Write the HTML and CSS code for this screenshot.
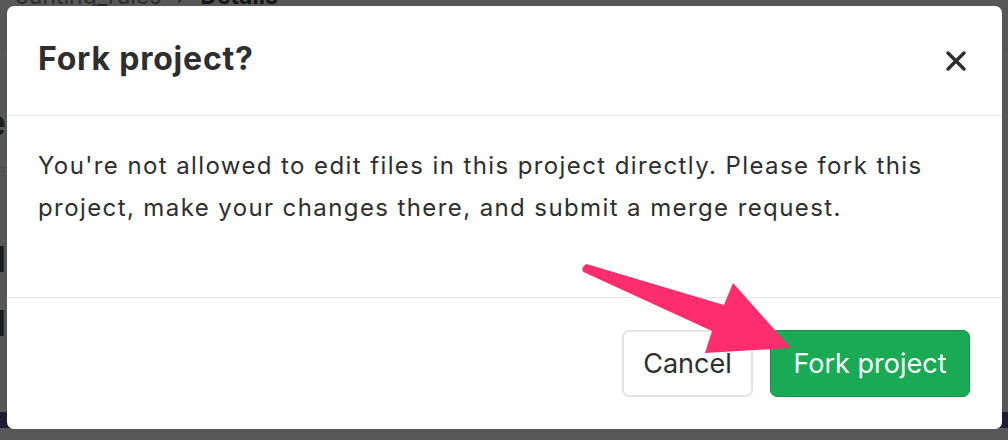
FILE: index.html
```html
<!DOCTYPE html>
<html>
<head>
<meta charset="utf-8">
<link rel="stylesheet" href="styles.css">
</head>
<body>
<div class="page">
  <div class="crumbs">
    <span class="crumb">ounting_rules</span>
    <span class="sep">›</span>
    <span class="crumb-cur">Details</span>
  </div>
  <div class="side">
    <div class="clip big"><span>Rule</span></div>
    <div class="clip faint"><span>note</span></div>
    <div class="clip num"><span>1</span></div>
    <div class="clip word"><span>Id</span></div>
  </div>
  <div class="foot"></div>
</div>

<div class="modal" role="dialog">
  <div class="modal-header">
    <h4 class="modal-title">Fork project?</h4>
    <button class="close" aria-label="Close">
      <svg width="22" height="22" viewBox="0 0 22 22"><path d="M3 3 L19 19 M19 3 L3 19" stroke="#2e2e2e" stroke-width="3.4" stroke-linecap="round" fill="none"/></svg>
    </button>
  </div>
  <div class="modal-body">
    <p>You're not allowed to edit files in this project directly. Please fork this project, make your changes there, and submit a merge request.</p>
  </div>
  <div class="modal-footer">
    <button class="btn btn-cancel">Cancel</button>
    <button class="btn btn-fork">Fork project</button>
  </div>
</div>

<svg class="arrow" width="1008" height="440" viewBox="0 0 1008 440">
  <path d="M586.5 264 L724 305 L733 283 L791 348 L705 353 L712 331 L583.5 272 Q580 268 586.5 264 Z" fill="#fd2d6e"/>
</svg>
</body>
</html>
```

FILE: styles.css
```css
* { box-sizing: border-box; }
html, body { margin: 0; padding: 0; }
body {
  width: 1008px;
  height: 440px;
  overflow: hidden;
  position: relative;
  background: #575757;
  font-family: Inter, "Noto Sans", "Liberation Sans", sans-serif;
}

.page {
  height: 440px;
  display: flex;
  flex-direction: column;
}
.crumbs {
  margin-top: -15px;
  height: 65px;
  flex: none;
  border-bottom: 1px solid #4f4f4f;
  padding-left: 15px;
  display: flex;
  align-items: flex-start;
  gap: 15px;
  font-size: 23px;
  line-height: 23px;
}
.crumb { color: #2c2c2c; }
.sep { color: #2c2c2c; }
.crumb-cur { color: #151515; font-weight: 700; }

.side {
  flex: 1;
  display: flex;
  flex-direction: column;
}
.clip {
  width: 6px;
  overflow: hidden;
  display: flex;
  justify-content: flex-end;
  white-space: nowrap;
  color: #1c1c1c;
}
.big { margin-top: 52px; font-size: 38px; font-weight: 700; line-height: 40px; }
.faint { margin-top: 18px; font-size: 16px; color: #4a4a4a; line-height: 20px; }
.num { margin-top: 61px; font-size: 36px; font-weight: 700; line-height: 36px; }
.word { margin-top: 28px; font-size: 36px; font-weight: 700; line-height: 36px; }

.foot {
  flex: none;
  height: 16px;
  margin-bottom: 12px;
  background: #201b34;
}

.modal {
  position: absolute;
  left: 7px;
  top: 6px;
  width: 995px;
  height: 423px;
  background: #fff;
  border-radius: 7px;
  display: flex;
  flex-direction: column;
  color: #2e2e2e;
}
.modal-header {
  flex: none;
  height: 110px;
  border-bottom: 1px solid #e5e5e5;
  display: flex;
  align-items: center;
  justify-content: space-between;
  padding: 0 35px 4px 31px;
}
.modal-title {
  margin: 0;
  font-size: 32px;
  font-weight: 700;
  letter-spacing: 0.8px;
  line-height: 38px;
  color: #2e2e2e;
}
.close {
  border: 0;
  background: none;
  padding: 0;
  width: 22px;
  height: 22px;
  display: flex;
  margin-top: 4px;
}
.modal-body {
  flex: 1;
  padding: 29px 31px 0;
}
.modal-body p {
  margin: 0;
  font-size: 24px;
  letter-spacing: 1.4px;
  line-height: 42px;
  color: #2e2e2e;
}
.modal-footer {
  flex: none;
  height: 132px;
  border-top: 1px solid #e5e5e5;
  padding: 32px 32px;
  display: flex;
  justify-content: flex-end;
  align-items: flex-start;
  gap: 17px;
}
.btn {
  height: 67px;
  border-radius: 7px;
  font-family: inherit;
  font-size: 27px;
  padding: 0;
  cursor: pointer;
}
.btn-cancel {
  width: 131px;
  background: #fff;
  border: 2px solid #e3e3e3;
  color: #2e2e2e;
}
.btn-fork {
  width: 200px;
  background: #1aaa55;
  border: 1px solid #168f48;
  color: #fff;
}
.arrow {
  position: absolute;
  left: 0;
  top: 0;
  pointer-events: none;
}
```
